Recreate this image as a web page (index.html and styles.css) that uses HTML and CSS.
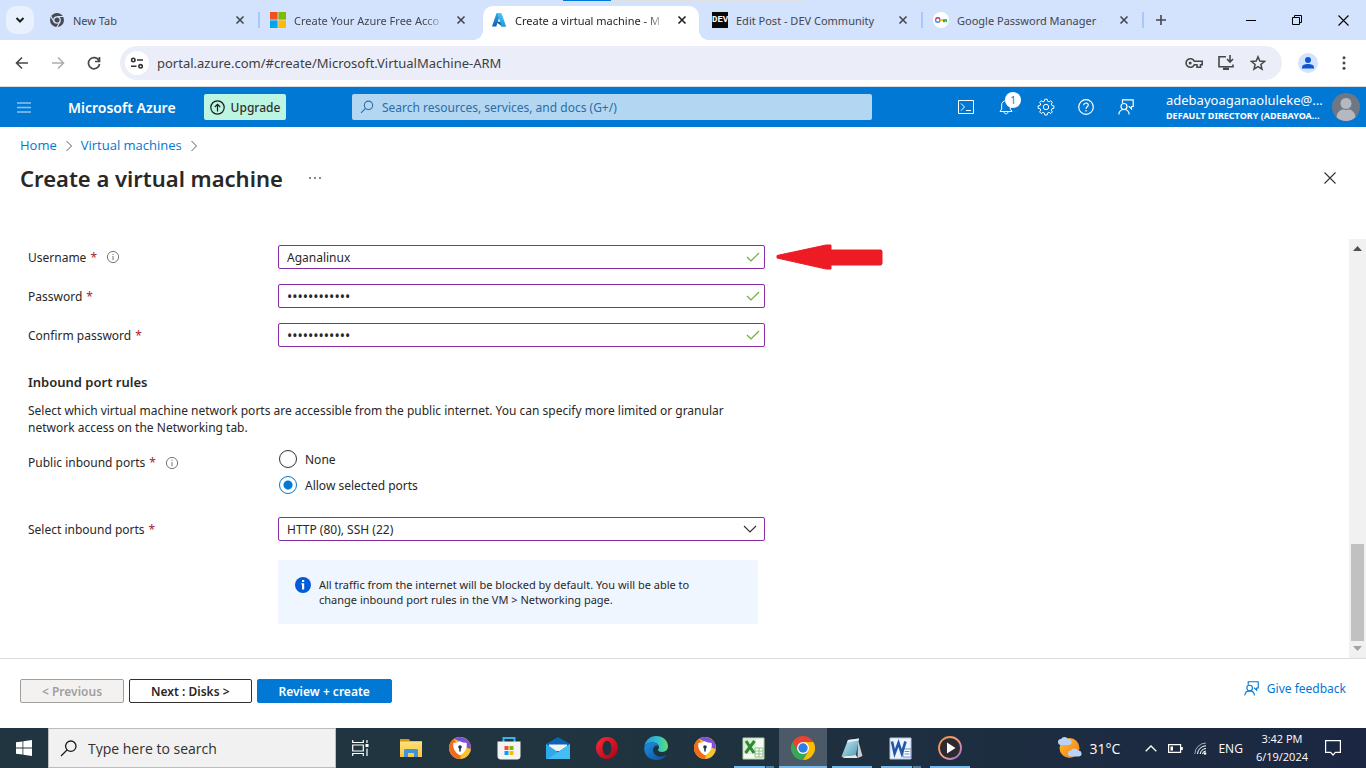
FILE: index.html
```html
<!DOCTYPE html>
<html lang="en">
<head>
  <meta charset="UTF-8">
  <meta name="viewport" content="width=device-width, initial-scale=1.0">
  <title>Create a virtual machine - Microsoft Azure</title>
  <link rel="stylesheet" href="styles.css">
</head>
<body>

  <!-- Shared shapes -->
  <svg class="defs" width="0" height="0">
    <defs>
      <linearGradient id="azureA" x1="0" y1="0" x2="0" y2="1"><stop offset="0" stop-color="#2fa8ea"/><stop offset="1" stop-color="#0f5fb4"/></linearGradient>
      <linearGradient id="azureB" x1="0" y1="0" x2="0" y2="1"><stop offset="0" stop-color="#3ccbf4"/><stop offset="1" stop-color="#2892df"/></linearGradient>
      <linearGradient id="operaRed" x1="0" y1="0" x2="1" y2="1"><stop offset="0" stop-color="#ff2b3a"/><stop offset="1" stop-color="#a70014"/></linearGradient>
      <linearGradient id="edgeTop" x1="0" y1="0" x2="1" y2="0"><stop offset="0" stop-color="#1e9be6"/><stop offset=".6" stop-color="#35c1c9"/><stop offset="1" stop-color="#5fe06a"/></linearGradient>
      <linearGradient id="edgeBottom" x1="0" y1="0" x2="1" y2="1"><stop offset="0" stop-color="#1e90e0"/><stop offset="1" stop-color="#0c4d9c"/></linearGradient>
      <linearGradient id="mediaRing" x1="0" y1="0" x2="1" y2="1"><stop offset="0" stop-color="#f58a3a"/><stop offset=".5" stop-color="#f0a08c"/><stop offset="1" stop-color="#a06bd8"/></linearGradient>
      <linearGradient id="folder" x1="0" y1="0" x2="0" y2="1"><stop offset="0" stop-color="#ffe07a"/><stop offset="1" stop-color="#fbc73c"/></linearGradient>
      <linearGradient id="sun" x1="0" y1="0" x2="1" y2="1"><stop offset="0" stop-color="#ffc02e"/><stop offset="1" stop-color="#f07a1c"/></linearGradient>
      <linearGradient id="pad" x1="0" y1="0" x2="1" y2="1"><stop offset="0" stop-color="#c9ecf4"/><stop offset="1" stop-color="#4a9bb4"/></linearGradient>
      <symbol id="close" viewBox="0 0 10 10"><path d="M1.500 1.500l7 7M8.500 1.500l-7 7" stroke="currentColor" stroke-width="1.600"/></symbol>
      <symbol id="info" viewBox="0 0 14 14"><circle cx="7" cy="7" r="5.600" fill="none" stroke="#797775"/><path d="M7 6v4.200M7 3.800v1.200" stroke="#797775"/></symbol>
      <symbol id="check" viewBox="0 0 14 12"><path d="M1 6l4 4 8-8" fill="none" stroke="#6bb13c" stroke-width="1.200"/></symbol>
      <symbol id="chevron" viewBox="0 0 8 12"><path d="M1.500 1l5 5-5 5" fill="none" stroke="#605e5c"/></symbol>
      <symbol id="feedback" viewBox="0 0 16 16"><g fill="none" stroke="currentColor" stroke-width="1.200"><path d="M4.500 4V.8h10.700v6.700h-1.700v2.300l-2.300-2.300h-.7"/><circle cx="6" cy="7.500" r="3"/><path d="M.8 15.500c.3-3 2.300-5 5.200-5s4.900 2 5.200 5"/></g></symbol>
      <symbol id="avast" viewBox="0 0 24 24">
        <circle cx="12" cy="12" r="11" fill="#f9c22e"/>
        <path d="M12 23A11 11 0 0 1 6 2.800L9 8l-1 6 5 5z" fill="#f26a1b"/>
        <path d="M6 2.800A11 11 0 0 1 22.800 13L17 11 13 6z" fill="#7c4fe0"/>
        <path d="M12 6c1.800 1.200 3.600 1.400 6 1.400.6 5-1.500 8.600-6 11.100-4.500-2.500-6.600-6.100-6-11.100 2.400 0 4.200-.2 6-1.400z" fill="#fff" stroke="#fff" stroke-width="1.500" stroke-linejoin="round"/>
        <circle cx="12" cy="11" r="1.800" fill="#23324d"/><path d="M11.200 11.500h1.600v4h-1.600z" fill="#23324d"/>
      </symbol>
    </defs>
  </svg>

  <!-- Browser window -->
  <div class="share-bar"></div>
  <div class="tabs">
    <button class="tab-search" aria-label="Search tabs">
      <svg width="10" height="8" viewBox="0 0 10 8"><path d="M1.500 2l3.500 3.500L8.500 2" fill="none" stroke="#1f1f1f" stroke-width="2"/></svg>
    </button>
    <div class="tab">
      <svg class="favicon" viewBox="0 0 16 16"><circle cx="8" cy="8" r="7" fill="#474a4f"/><circle cx="8" cy="8" r="3.200" fill="#474a4f" stroke="#d3e2fd" stroke-width="1.300"/><path d="M8 4.500h6.500M5 9.800L1.800 4.200M11 9.800l-3.200 5.400" stroke="#d3e2fd" stroke-width="1.200"/></svg>
      <span class="tab-title">New Tab</span>
      <button class="tab-close" aria-label="Close tab"><svg width="10" height="10"><use href="#close"/></svg></button>
    </div>
    <div class="tab">
      <svg class="favicon" viewBox="0 0 16 16"><path d="M0 0h7.600v7.600H0z" fill="#f25022"/><path d="M8.400 0H16v7.600H8.400z" fill="#7fba00"/><path d="M0 8.400h7.600V16H0z" fill="#00a4ef"/><path d="M8.400 8.400H16V16H8.400z" fill="#ffb900"/></svg>
      <span class="tab-title clipped">Create Your Azure Free Acco</span>
      <button class="tab-close" aria-label="Close tab"><svg width="10" height="10"><use href="#close"/></svg></button>
    </div>
    <div class="tab active">
      <svg class="favicon" viewBox="0 0 16 16"><path d="M5.500 1.200h4L5.300 14.500H1z" fill="url(#azureA)"/><path d="M5 9.800h7l-1 4.700z" fill="#0a5cab"/><path d="M6.500 1.200h4L15.200 14.800h-4.700z" fill="url(#azureB)"/></svg>
      <span class="tab-title clipped">Create a virtual machine - M</span>
      <button class="tab-close" aria-label="Close tab"><svg width="10" height="10"><use href="#close"/></svg></button>
    </div>
    <div class="tab">
      <span class="favicon dev">DEV</span>
      <span class="tab-title">Edit Post - DEV Community</span>
      <button class="tab-close" aria-label="Close tab"><svg width="10" height="10"><use href="#close"/></svg></button>
    </div>
    <div class="tab">
      <svg class="favicon" viewBox="0 0 16 16"><circle cx="8" cy="8" r="8" fill="#fff"/><circle cx="4.800" cy="8" r="2.200" fill="none" stroke="#4285f4" stroke-width="1.400"/><path d="M3 6.600a2.200 2.200 0 0 1 3.600 0" fill="none" stroke="#ea4335" stroke-width="1.400"/><path d="M7 7.200h3v1.700H7z" fill="#fbbc04"/><path d="M10 7.200h4v3h-1.300V8.900H12v1.300h-2z" fill="#34a853"/></svg>
      <span class="tab-title">Google Password Manager</span>
      <button class="tab-close" aria-label="Close tab"><svg width="10" height="10"><use href="#close"/></svg></button>
    </div>
    <button class="new-tab" aria-label="New tab"><svg width="12" height="12" viewBox="0 0 12 12"><path d="M6 1v10M1 6h10" stroke="#43474e" stroke-width="1.600"/></svg></button>
    <div class="window-buttons">
      <button aria-label="Minimize"><svg width="10" height="10" viewBox="0 0 10 10"><path d="M0 5.500h10" stroke="#000"/></svg></button>
      <button aria-label="Restore"><svg width="10" height="10" viewBox="0 0 10 10"><path d="M.5 2.500h7v7h-7zM2.500 2.500v-2h7v7h-2" fill="none" stroke="#000"/></svg></button>
      <button aria-label="Close"><svg width="11" height="11" viewBox="0 0 11 11"><path d="M.5.5l10 10M10.500.5l-10 10" stroke="#000" stroke-width="1.100"/></svg></button>
    </div>
  </div>

  <div class="toolbar">
    <button class="nav-btn" aria-label="Back"><svg width="14" height="14" viewBox="0 0 14 14"><path d="M13 7H2M7 1.500L1.500 7 7 12.500" fill="none" stroke="#474747" stroke-width="1.600"/></svg></button>
    <button class="nav-btn" aria-label="Forward"><svg width="14" height="14" viewBox="0 0 14 14"><path d="M1 7h11M7 1.500L12.500 7 7 12.500" fill="none" stroke="#aeaeae" stroke-width="1.600"/></svg></button>
    <button class="nav-btn" aria-label="Reload"><svg width="14" height="14" viewBox="0 0 14 14"><path d="M12 4.500A5.600 5.600 0 1 0 12.600 8M12.500 1v4.500H8" fill="none" stroke="#474747" stroke-width="1.700"/></svg></button>
    <div class="omnibox">
      <button class="site-info" aria-label="Site information"><svg width="14" height="12" viewBox="0 0 14 12"><g fill="none" stroke="#333" stroke-width="1.600"><circle cx="3.300" cy="3" r="1.700"/><path d="M7 3h6M1 9.300h5.500"/><circle cx="10.600" cy="9.300" r="1.700"/></g></svg></button>
      <input class="url" type="text" aria-label="Address" value="portal.azure.com/#create/Microsoft.VirtualMachine-ARM">
      <button class="omni-btn" aria-label="Passwords"><svg width="18" height="12" viewBox="0 0 18 12"><path d="M9.300 4.300A4.300 4.300 0 1 0 9.300 7.700H12v2.500h3.500V7.700h1.700V4.300z" fill="none" stroke="#474747" stroke-width="1.600"/><circle cx="5.200" cy="6" r="1.500" fill="#474747"/></svg></button>
      <button class="omni-btn" aria-label="Install app"><svg width="18" height="16" viewBox="0 0 18 16"><path d="M9 1.800H2v10h14V9.500" fill="none" stroke="#474747" stroke-width="1.600"/><path d="M6 12.500h6v2.500H6z" fill="#474747"/><path d="M13 0v6.500M10 4l3 3 3-3" fill="none" stroke="#474747" stroke-width="1.600"/></svg></button>
      <button class="omni-btn" aria-label="Bookmark"><svg width="16" height="16" viewBox="0 0 16 16"><path d="M8 1.800l1.800 4.300 4.700.4-3.600 3 1.100 4.600L8 11.700l-4 2.400 1.100-4.600-3.600-3 4.700-.4z" fill="none" stroke="#474747" stroke-width="1.500"/></svg></button>
    </div>
    <button class="profile" aria-label="Profile"><svg width="20" height="20" viewBox="0 0 20 20"><circle cx="10" cy="10" r="10" fill="#d3e3fd"/><circle cx="10" cy="7" r="3" fill="#0b57d0"/><path d="M4 15.500v-1.300c0-2 3-3.200 6-3.200s6 1.200 6 3.200v1.300z" fill="#0b57d0"/></svg></button>
    <button class="menu" aria-label="Menu"><svg width="4" height="14" viewBox="0 0 4 14"><g fill="#474747"><circle cx="2" cy="1.800" r="1.500"/><circle cx="2" cy="7" r="1.500"/><circle cx="2" cy="12.200" r="1.500"/></g></svg></button>
  </div>

  <!-- Azure top bar -->
  <header class="azure-bar">
    <button class="burger" aria-label="Show portal menu"><svg width="14" height="11" viewBox="0 0 14 11"><path d="M0 1h14M0 5.500h14M0 10h14" stroke="#8fc4ee" stroke-width="1.500"/></svg></button>
    <a class="brand" href="#">Microsoft Azure</a>
    <button class="upgrade"><svg width="15" height="15" viewBox="0 0 15 15"><g fill="none" stroke="#1b1a19" stroke-width="1.200"><circle cx="7.500" cy="7.500" r="6.700"/><path d="M7.500 11.500v-7M4.800 7l2.700-2.700L10.200 7"/></g></svg>Upgrade</button>
    <label class="azure-search">
      <svg width="14" height="14" viewBox="0 0 14 14"><g fill="none" stroke="#2b6da5" stroke-width="1.100"><circle cx="8.500" cy="5.300" r="4.200"/><path d="M5.500 8.300L1 12.800"/></g></svg>
      <input type="text" aria-label="Search" placeholder="Search resources, services, and docs (G+/)">
    </label>
    <div class="azure-icons">
      <button aria-label="Cloud Shell"><svg width="16" height="14" viewBox="0 0 16 14"><path d="M.5.500h15v13H.5zM3 3.500L6.500 7 3 10.500M8 10.500h5" fill="none" stroke="#fff"/></svg></button>
      <button aria-label="Notifications"><svg width="14" height="16" viewBox="0 0 14 16"><path d="M1 12.500h12l-1.700-2.500V6c0-2.500-1.800-4.200-4.300-4.200S2.700 3.500 2.700 6v4zM5 13c.3 1.300 1 1.800 2 1.800s1.700-.5 2-1.800" fill="none" stroke="#fff"/></svg><span class="badge">1</span></button>
      <button aria-label="Settings"><svg width="18" height="18" viewBox="0 0 18 18"><g fill="none" stroke="#fff"><path d="M7.800 1.200h2.400l.4 2 1.500.6 1.700-1.100 1.600 1.600-1.100 1.700.6 1.500 2 .4v2.400l-2 .4-.6 1.500 1.100 1.700-1.600 1.600-1.700-1.100-1.500.6-.4 2H7.800l-.4-2-1.500-.6-1.700 1.100-1.600-1.600 1.100-1.700-.6-1.500-2-.4V7.900l2-.4.6-1.500-1.100-1.700 1.600-1.600 1.700 1.100 1.500-.6z"/><circle cx="9" cy="9" r="2.700"/></g></svg></button>
      <button aria-label="Help"><svg width="16" height="16" viewBox="0 0 16 16"><g fill="none" stroke="#fff" stroke-width="1.200"><circle cx="8" cy="8" r="7.300"/><path d="M5.700 6.200C5.700 4.800 6.700 4 8 4s2.300.8 2.300 2.100C10.300 7.700 8 7.800 8 9.700M8 11v1.500"/></g></svg></button>
      <button aria-label="Feedback"><svg width="16" height="16"><use href="#feedback"/></svg></button>
    </div>
    <button class="account">
      <span class="account-text"><span class="email">adebayoaganaoluleke@...</span><span class="directory">DEFAULT DIRECTORY (ADEBAYOA...</span></span>
      <svg width="28" height="28" viewBox="0 0 28 28"><circle cx="14" cy="14" r="14" fill="#6f7785"/><path d="M4.500 24.200C5 18.500 9 16 14 16s9 2.500 9.500 8.200A14 14 0 0 1 4.500 24.200z" fill="#b5b9bf"/><circle cx="14" cy="10.500" r="6" fill="#b5b9bf" stroke="#6f7785"/></svg>
    </button>
  </header>

  <!-- Blade -->
  <nav class="breadcrumb">
    <a href="#">Home</a>
    <svg width="8" height="12"><use href="#chevron"/></svg>
    <a href="#">Virtual machines</a>
    <svg width="8" height="12"><use href="#chevron"/></svg>
  </nav>
  <div class="blade-title">
    <h1>Create a virtual machine</h1>
    <button class="more" aria-label="More"><svg width="12" height="2" viewBox="0 0 12 2"><path d="M0 0h2v2H0zM5 0h2v2H5zM10 0h2v2h-2z" fill="#8a8886"/></svg></button>
    <button class="blade-close" aria-label="Close"><svg width="12" height="12" viewBox="0 0 12 12"><path d="M.5.500l11 11M11.500.500l-11 11" stroke="#323130" stroke-width="1.100"/></svg></button>
  </div>

  <main class="blade">
    <form class="vm-form">
      <div class="row">
        <label for="username">Username <span class="req">*</span><svg class="info" width="14" height="14"><use href="#info"/></svg></label>
        <div class="field"><input type="text" id="username" value="Aganalinux"><svg class="mark" width="14" height="12"><use href="#check"/></svg></div>
        <svg class="pointer" width="107" height="26" viewBox="0 0 107 26"><path d="M1 11.500L50 1h5v5h50l1 1v13l-1 1H55v4h-5L1 14z" fill="#ed1c24" stroke="#ed1c24"/></svg>
      </div>
      <div class="row">
        <label for="password">Password <span class="req">*</span></label>
        <div class="field"><input type="password" id="password" value="aganalinux12"><svg class="mark" width="14" height="12"><use href="#check"/></svg></div>
      </div>
      <div class="row">
        <label for="confirm">Confirm password <span class="req">*</span></label>
        <div class="field"><input type="password" id="confirm" value="aganalinux12"><svg class="mark" width="14" height="12"><use href="#check"/></svg></div>
      </div>

      <h2>Inbound port rules</h2>
      <p class="desc">Select which virtual machine network ports are accessible from the public internet. You can specify more limited or granular network access on the Networking tab.</p>

      <div class="row ports" role="radiogroup" aria-labelledby="portsLabel">
        <span class="row-label" id="portsLabel">Public inbound ports <span class="req">*</span><svg class="info" width="14" height="14"><use href="#info"/></svg></span>
        <div class="radios">
          <label><input type="radio" name="ports">None</label>
          <label><input type="radio" name="ports" checked>Allow selected ports</label>
        </div>
      </div>
      <div class="row">
        <label for="inbound">Select inbound ports <span class="req">*</span></label>
        <div class="field">
          <select id="inbound"><option>HTTP (80), SSH (22)</option></select>
          <svg class="mark" width="14" height="8" viewBox="0 0 14 8"><path d="M1 1l6 6 6-6" fill="none" stroke="#323130" stroke-width="1.100"/></svg>
        </div>
      </div>
      <div class="notice">
        <svg width="16" height="16" viewBox="0 0 16 16"><circle cx="8" cy="8" r="8" fill="#015cda"/><path d="M7 3h2.200v2H7zM6.300 6.300h2.900v6.200H7V7.500h-.7z" fill="#fff"/></svg>
        <p>All traffic from the internet will be blocked by default. You will be able to change inbound port rules in the VM &gt; Networking page.</p>
      </div>
    </form>
    <div class="scrollbar">
      <svg width="9" height="5" viewBox="0 0 9 5"><path d="M0 5l4.500-5L9 5z" fill="#505050"/></svg>
      <div class="thumb"></div>
      <svg width="9" height="5" viewBox="0 0 9 5"><path d="M0 0l4.500 5L9 0z" fill="#a3a3a3"/></svg>
    </div>
  </main>

  <footer class="actions">
    <button class="btn" disabled>&lt; Previous</button>
    <button class="btn">Next : Disks &gt;</button>
    <button class="btn primary">Review + create</button>
    <a class="feedback" href="#"><svg width="15" height="15"><use href="#feedback"/></svg>Give feedback</a>
  </footer>

  <!-- Windows taskbar -->
  <div class="taskbar">
    <button class="task" aria-label="Start"><svg width="16" height="16" viewBox="0 0 16 16"><path d="M0 2.300l6.500-.9v6.200H0zM7.300 1.300L16 0v7.600H7.300zM0 8.400h6.500v6.200L0 13.700zM7.300 8.400H16V16l-8.700-1.300z" fill="#fff"/></svg></button>
    <label class="task-search">
      <svg width="17" height="17" viewBox="0 0 17 17"><g fill="none" stroke="#1a1a1a" stroke-width="1.300"><circle cx="10.800" cy="6.200" r="5.200"/><path d="M7 10L1 16"/></g></svg>
      <input type="text" aria-label="Search" placeholder="Type here to search">
    </label>
    <button class="task" aria-label="Task view"><svg width="17" height="16" viewBox="0 0 17 16"><path d="M.7 0v2.500h10.600V0M.7 16v-2.500h10.600V16M.7 5h10.600v6H.7zM15 0v3M15 8.500V16" fill="none" stroke="#fff" stroke-width="1.200"/><path d="M13.500 4h3v3h-3z" fill="#fff"/></svg></button>
    <div class="apps">
      <button class="task" aria-label="File Explorer"><svg width="22" height="20" viewBox="0 0 22 20"><path d="M0 1h9l1 2h12v16H0z" fill="#d9960e"/><path d="M0 3.500h22V19H0z" fill="url(#folder)"/><path d="M4 19v-7.500L6 11h10l2 .5V19h-4v-4H8v4z" fill="#3f95dc"/></svg></button>
      <button class="task" aria-label="Secure Browser"><svg width="24" height="24"><use href="#avast"/></svg></button>
      <button class="task" aria-label="Microsoft Store"><svg width="24" height="24" viewBox="0 0 24 24"><path d="M6.500 6V2h11v4" fill="none" stroke="#30b8ee" stroke-width="2"/><path d="M.5 5.500h23V20c0 2.200-1 3.500-3.500 3.500H4C1.500 23.500.5 22.200.5 20z" fill="#f3f3f3"/><path d="M7.500 10h4v4h-4z" fill="#f25022"/><path d="M12.500 10h4v4h-4z" fill="#7fba00"/><path d="M7.500 15h4v4h-4z" fill="#00a4ef"/><path d="M12.500 15h4v4h-4z" fill="#ffb900"/></svg></button>
      <button class="task" aria-label="Mail"><svg width="24" height="22" viewBox="0 0 24 22"><path d="M0 7l12-7 12 7v6H0z" fill="#0b63b4"/><path d="M3 7.500h18V14H3z" fill="#f2f2f2"/><path d="M0 7l12 8 12-8v15H0z" fill="#2ea9ea"/><path d="M24 7v15H2l10-7z" fill="#44bdf3"/></svg></button>
      <button class="task" aria-label="Opera"><svg width="24" height="24" viewBox="0 0 24 24"><path d="M12 1a11 11 0 1 0 0 22 11 11 0 0 0 0-22zm0 3.800c2.700 0 4.400 3 4.400 7.200s-1.700 7.200-4.400 7.200-4.400-3-4.400-7.200S9.300 4.800 12 4.800z" fill="url(#operaRed)" fill-rule="evenodd"/></svg></button>
      <button class="task" aria-label="Edge"><svg width="24" height="24" viewBox="0 0 24 24"><path d="M.3 10.500C1.200 4.500 6 0 12.200 0 19 0 24 4.800 24 10.300c0 3.400-2.500 5.700-5.800 5.700-2.500 0-4.200-1-4.200-2 0-.7 1-1 1-2.800C15 8.500 12 6.500 8.500 6.500 4.500 6.500 1.300 8.500.3 10.500z" fill="url(#edgeTop)"/><path d="M.2 12.500C.2 9 4 6.500 8.500 6.500c3.500 0 6 1.700 6.500 4-1-1-2.500-1.300-3.500-.8-2 1-2.800 3-2.500 5 .6 3.800 4 6 8 5.800 2-.1 3.700-.7 4.800-1.300.5-.2.800.1.500.5C20.200 22.500 16.300 24 12 24 5.300 24 .2 19 .2 12.500z" fill="url(#edgeBottom)"/></svg></button>
      <button class="task" aria-label="Secure Browser"><svg width="24" height="24"><use href="#avast"/></svg></button>
      <button class="task open many" aria-label="Excel"><svg width="24" height="23" viewBox="0 0 24 23"><path d="M1 1h21v21H1z" fill="#f5f9f2" stroke="#b7d3ab"/><path d="M2 2h12v15H2z" fill="#dcefd3"/><path d="M13 11h8v9h-8z" fill="#fff" stroke="#8cc084"/><path d="M13 14h8M13 17h8M17 11v9" stroke="#8cc084"/><path d="M4 4l8 12M12.500 4L3.500 16" stroke="#2d8a34" stroke-width="3"/></svg></button>
      <button class="task current" aria-label="Chrome"><svg width="24" height="24" viewBox="0 0 24 24"><path d="M1.600 6A12 12 0 0 0 12 24l5-9-5-3z" fill="#34a853"/><path d="M12 6h10.400A12 12 0 0 1 12 24l5.200-9z" fill="#fbbc04"/><path d="M1.600 6A12 12 0 0 1 22.400 6H12v6l-5.200 3z" fill="#ea4335"/><circle cx="12" cy="12" r="6" fill="#fff"/><circle cx="12" cy="12" r="4.700" fill="#2f7de9"/></svg></button>
      <button class="task open" aria-label="Notepad"><svg width="24" height="24" viewBox="0 0 24 24"><path d="M18 4l4.500 16-5 2z" fill="#c9ced3"/><path d="M8 4l11-1.500L16 19 1.500 20.500z" fill="url(#pad)"/><path d="M8 4l11-1.500-.4 2L7 6.500z" fill="#e7eef1"/><path d="M1.500 20.500L16 19l1.500 3L4 22z" fill="#e8e8e8"/></svg></button>
      <button class="task open many" aria-label="Word"><svg width="24" height="23" viewBox="0 0 24 23"><path d="M1 1h21v21H1z" fill="#eef4fb" stroke="#b5c8e2"/><path d="M14 12h8v8h-8z" fill="#fff" stroke="#6a8fc8"/><path d="M15.500 14.500h5M15.500 17h5" stroke="#6a8fc8"/><path d="M3 4.500l2.600 12L9.500 6l3.300 10.500L16.500 4.500" fill="none" stroke="#2356a8" stroke-width="2.600"/></svg></button>
      <button class="task open" aria-label="Media Player"><svg width="24" height="24" viewBox="0 0 24 24"><circle cx="12" cy="12" r="11" fill="#2d2a30" stroke="url(#mediaRing)" stroke-width="1.800"/><path d="M9 6.500l8.500 5.500L9 17.500z" fill="#fff"/></svg></button>
    </div>
    <div class="tray">
      <svg width="26" height="24" viewBox="0 0 26 24"><circle cx="12.500" cy="12" r="10" fill="url(#sun)"/><path d="M4 9a3 3 0 0 1 0-6 4 4 0 0 1 7 0 3 3 0 0 1 1 6z" fill="#b9d2f7"/><path d="M14 20.500a3 3 0 0 1 0-6 4 4 0 0 1 7 0 3 3 0 0 1 1 6z" fill="#b9d2f7"/></svg>
      <span class="temp">31°C</span>
      <svg class="up" width="12" height="7" viewBox="0 0 12 7"><path d="M.7 6.300L6 1l5.300 5.300" fill="none" stroke="#fff" stroke-width="1.300"/></svg>
      <svg class="battery" width="15" height="9" viewBox="0 0 15 9"><path d="M.6.600h12v7.800H.6z" fill="none" stroke="#fff" stroke-width="1.200"/><path d="M2.500 2.500h2.500v4H2.500zM13 3h1.800v3H13z" fill="#fff"/></svg>
      <svg class="wifi" width="13" height="13" viewBox="0 0 13 13"><g fill="none" stroke="#fff"><path d="M.8 12A11.300 11.300 0 0 1 12 1" stroke="#9fabb9"/><path d="M3.500 12A8.600 8.600 0 0 1 12 3.800M6.200 12A6 6 0 0 1 12 6.500M8.500 12A3.500 3.500 0 0 1 12 9"/></g><circle cx="11" cy="11.500" r="1.300" fill="#fff"/></svg>
      <span class="lang">ENG</span>
      <span class="clock">3:42 PM<br>6/19/2024</span>
      <svg class="action-center" width="16" height="16" viewBox="0 0 16 16"><path d="M.6.600h14.800v11.800h-5L8 15l-2.400-2.600h-5z" fill="none" stroke="#fff" stroke-width="1.200"/></svg>
    </div>
  </div>

</body>
</html>
```

FILE: styles.css
```css
* {
  box-sizing: border-box;
}
body {
  margin: 0;
  min-height: 100vh;
  display: flex;
  flex-direction: column;
  font-family: 'Segoe UI', 'Noto Sans', 'Open Sans', sans-serif;
  font-size: 12px;
  line-height: 17px;
  color: #292827;
  background-color: #fff;
}
button, input, select {
  font: inherit;
  color: inherit;
  border: none;
  background: none;
  padding: 0;
  margin: 0;
  outline: none;
}
button {
  display: flex;
  align-items: center;
  justify-content: center;
  flex-shrink: 0;
}
a {
  color: #0078d4;
  text-decoration: none;
}
svg {
  flex-shrink: 0;
}
.defs {
  position: absolute;
}

/* browser tabs */
.share-bar {
  position: absolute;
  top: 0;
  left: 563px;
  width: 241px;
  height: 1px;
  background: linear-gradient(to right, #0078d7 48px, #e0e0e0 48px);
}
.tabs {
  display: flex;
  height: 40px;
  padding-left: 6px;
  background-color: #d3e2fd;
}
.tab-search {
  width: 28px;
  height: 28px;
  margin: 6px 7px 0 0;
  border-radius: 10px;
  background-color: #e9f0fe;
}
.tab {
  position: relative;
  flex: 0 1 216px;
  min-width: 0;
  height: 34px;
  margin: 6px 5px 0 0;
  padding: 0 9px 6px 8px;
  display: flex;
  align-items: center;
  gap: 8px;
  font-size: 11px;
  color: #43474e;
}
.tab:not(.active)::after {
  content: '';
  position: absolute;
  right: -3px;
  top: 6px;
  width: 2px;
  height: 16px;
  background-color: #a8c7fa;
}
.tab:has(+ .active)::after {
  display: none;
}
.tab.active {
  background-color: #fff;
  border-radius: 10px 10px 0 0;
  color: #1f1f1f;
}
.tab.active::before, .tab.active::after {
  content: '';
  position: absolute;
  bottom: 0;
  width: 10px;
  height: 10px;
}
.tab.active::before {
  left: -10px;
  background: radial-gradient(circle at 0 0, transparent 10px, #fff 10px);
}
.tab.active::after {
  right: -10px;
  background: radial-gradient(circle at 100% 0, transparent 10px, #fff 10px);
}
.favicon {
  width: 16px;
  height: 16px;
}
.dev {
  flex-shrink: 0;
  background-color: #0a0a0a;
  color: #fff;
  font-family: 'Liberation Mono', monospace;
  font-size: 9px;
  font-weight: bold;
  line-height: 16px;
  text-align: center;
}
.tab-title {
  flex: 1;
  overflow: hidden;
  white-space: nowrap;
}
.clipped {
  mask-image: linear-gradient(to left, transparent, #000 20px);
}
.tab-close {
  width: 16px;
  height: 16px;
}
.new-tab {
  width: 30px;
  height: 40px;
}
.window-buttons {
  margin-left: auto;
  display: flex;
}
.window-buttons button {
  width: 46px;
  height: 40px;
}

/* browser toolbar */
.toolbar {
  display: flex;
  align-items: center;
  height: 47px;
  padding-left: 4px;
  border-bottom: 1px solid #dadce0;
}
.nav-btn {
  width: 36px;
  height: 34px;
}
.omnibox {
  flex: 1;
  display: flex;
  align-items: center;
  height: 34px;
  margin-left: 8px;
  padding: 0 8px 0 5px;
  border-radius: 17px;
  background-color: #ebeef8;
}
.site-info {
  width: 24px;
  height: 24px;
  border-radius: 12px;
  background-color: #fff;
}
.url {
  flex: 1;
  margin-left: 8px;
  font-size: 13px;
  color: #3c4043;
}
.omni-btn {
  width: 32px;
  height: 32px;
}
.profile {
  width: 20px;
  margin-left: 16px;
}
.menu {
  width: 44px;
  height: 34px;
  margin-left: 4px;
}

/* azure header */
.azure-bar {
  display: flex;
  align-items: center;
  height: 40px;
  background-color: #0078d4;
  color: #fff;
}
.burger {
  width: 48px;
  height: 40px;
}
.brand {
  width: 136px;
  margin-left: 20px;
  color: #fff;
  font-size: 14px;
  font-weight: 600;
}
.upgrade {
  gap: 6px;
  width: 82px;
  height: 26px;
  border-radius: 2px;
  background-color: #bcf5e2;
  color: #323130;
  font-weight: 500;
}
.azure-search {
  flex: 0 1 520px;
  display: flex;
  align-items: center;
  gap: 8px;
  height: 26px;
  margin-left: 66px;
  padding: 0 8px;
  border-radius: 2px;
  background-color: #b3d6f2;
}
.azure-search input {
  flex: 1;
}
.azure-search input::placeholder {
  color: #2b6da5;
  opacity: 1;
}
.azure-icons {
  display: flex;
  margin-left: auto;
}
.azure-icons button {
  position: relative;
  width: 40px;
  height: 40px;
}
.badge {
  position: absolute;
  top: 5px;
  left: 19px;
  width: 16px;
  height: 16px;
  border-radius: 8px;
  background-color: #fff;
  color: #0078d4;
  font-size: 10px;
  line-height: 16px;
}
.account {
  gap: 6px;
  margin: 0 6px 0 20px;
}
.account-text {
  width: 160px;
  display: flex;
  flex-direction: column;
  text-align: left;
  white-space: nowrap;
}
.email {
  font-size: 13px;
}
.directory {
  font-size: 9px;
  font-weight: 700;
  line-height: 14px;
}

/* blade */
.breadcrumb {
  display: flex;
  align-items: center;
  gap: 8px;
  padding: 10px 20px 0;
  font-family: 'Segoe UI', 'Open Sans', sans-serif;
  font-size: 13px;
}
.blade-title {
  display: flex;
  align-items: center;
  padding: 7px 30px 0 20px;
}
h1 {
  margin: 0;
  font-size: 22px;
  font-weight: 600;
  line-height: 34px;
}
.more {
  margin-left: 26px;
}
.blade-close {
  margin-left: auto;
}
.blade {
  flex: 1;
  display: flex;
  margin-top: 44px;
  border-bottom: 1px solid #dcdcdc;
}
.vm-form {
  flex: 1;
  padding: 6px 28px 34px;
}
.row {
  display: flex;
  align-items: center;
  height: 24px;
  margin-bottom: 15px;
}
.row > label, .row-label {
  width: 250px;
  display: flex;
  align-items: center;
  gap: 4px;
}
.req {
  color: #a4262c;
}
.info {
  margin-left: 5px;
}
.field {
  position: relative;
  width: 487px;
}
.field input, .field select {
  display: block;
  width: 100%;
  height: 24px;
  padding: 0 8px;
  border: 1px solid #8a2da5;
  border-radius: 2px;
  background-color: #fff;
  appearance: none;
}
.field input[type="password"] {
  font-size: 14px;
}
.mark {
  position: absolute;
  top: 0;
  bottom: 0;
  right: 5px;
  margin: auto;
}
.field select + .mark {
  right: 8px;
}
.pointer {
  margin-left: 11px;
}
h2 {
  margin: 26px 0 11px;
  font-size: 13px;
  font-weight: 600;
  line-height: 18px;
}
.desc {
  width: 720px;
  margin: 0 0 10px;
}
.ports {
  align-items: flex-start;
  height: auto;
  margin-bottom: 19px;
}
.row-label {
  padding-top: 8px;
}
.radios label {
  display: flex;
  align-items: center;
  gap: 8px;
  height: 26px;
}
.radios input {
  width: 18px;
  height: 18px;
  margin-left: 1px;
  border: 1px solid #323130;
  border-radius: 50%;
  appearance: none;
}
.radios input:checked {
  border-color: #0078d4;
  background: radial-gradient(circle, #0078d4 4px, transparent 5px);
}
.notice {
  display: flex;
  gap: 8px;
  width: 480px;
  margin: 19px 0 0 250px;
  padding: 17px 40px 17px 17px;
  border-radius: 2px;
  background-color: #f0f6ff;
  font-size: 11px;
  line-height: 15px;
}
.notice p {
  margin: 0;
}
.scrollbar {
  display: flex;
  flex-direction: column;
  align-items: center;
  width: 17px;
  padding: 7px 0;
  background-color: #f1f1f1;
}
.thumb {
  width: 13px;
  height: 97px;
  margin: auto 0 5px;
  background-color: #c1c1c1;
}
.actions {
  display: flex;
  align-items: center;
  gap: 5px;
  height: 69px;
  padding: 0 20px 5px;
}
.btn {
  height: 24px;
  padding: 0 21px;
  border: 1px solid #323130;
  border-radius: 2px;
  font-weight: 600;
}
.btn:disabled {
  border-color: #a19f9d;
  background-color: #f3f2f1;
  color: #a19f9d;
}
.btn.primary {
  border-color: #0078d4;
  background-color: #0078d4;
  color: #fff;
}
.feedback {
  display: flex;
  align-items: center;
  gap: 8px;
  margin-left: auto;
  padding-bottom: 6px;
}

/* taskbar */
.taskbar {
  display: flex;
  height: 40px;
  color: #fff;
  font-family: 'Segoe UI', 'Open Sans', sans-serif;
  background: linear-gradient(to right, #20353f 40%, #1b2742);
}
.task {
  position: relative;
  width: 48px;
  height: 40px;
}
.task-search {
  flex: 0 1 288px;
  display: flex;
  align-items: center;
  gap: 11px;
  padding-left: 11px;
  border: 1px solid #bdbdbd;
  background-color: #f1f1f1;
}
.task-search input {
  flex: 1;
  font-size: 14px;
}
.task-search input::placeholder {
  color: #303030;
  opacity: 1;
}
.apps {
  display: flex;
  gap: 1px;
  margin-left: 3px;
}
.current {
  background-color: #4b5a66;
}
.open::after, .current::after {
  content: '';
  position: absolute;
  left: 4px;
  right: 4px;
  bottom: 0;
  height: 2px;
  background-color: #76b9ed;
}
.current::after {
  left: 0;
  right: 0;
}
.many::after {
  background: linear-gradient(to right, #76b9ed 31px, #20353f 31px, #20353f 32px, #4f81a8 32px);
}
.tray {
  display: flex;
  align-items: center;
  margin-left: auto;
  padding-right: 4px;
}
.temp {
  width: 48px;
  margin-left: 6px;
  font-size: 14px;
}
.up {
  margin-left: 8px;
}
.battery {
  margin-left: 11px;
}
.wifi {
  margin-left: 11px;
}
.lang {
  margin-left: 11px;
}
.clock {
  margin-left: 13px;
  font-size: 11px;
  line-height: 18px;
  text-align: center;
}
.action-center {
  margin: 0 21px 0 17px;
}
```
